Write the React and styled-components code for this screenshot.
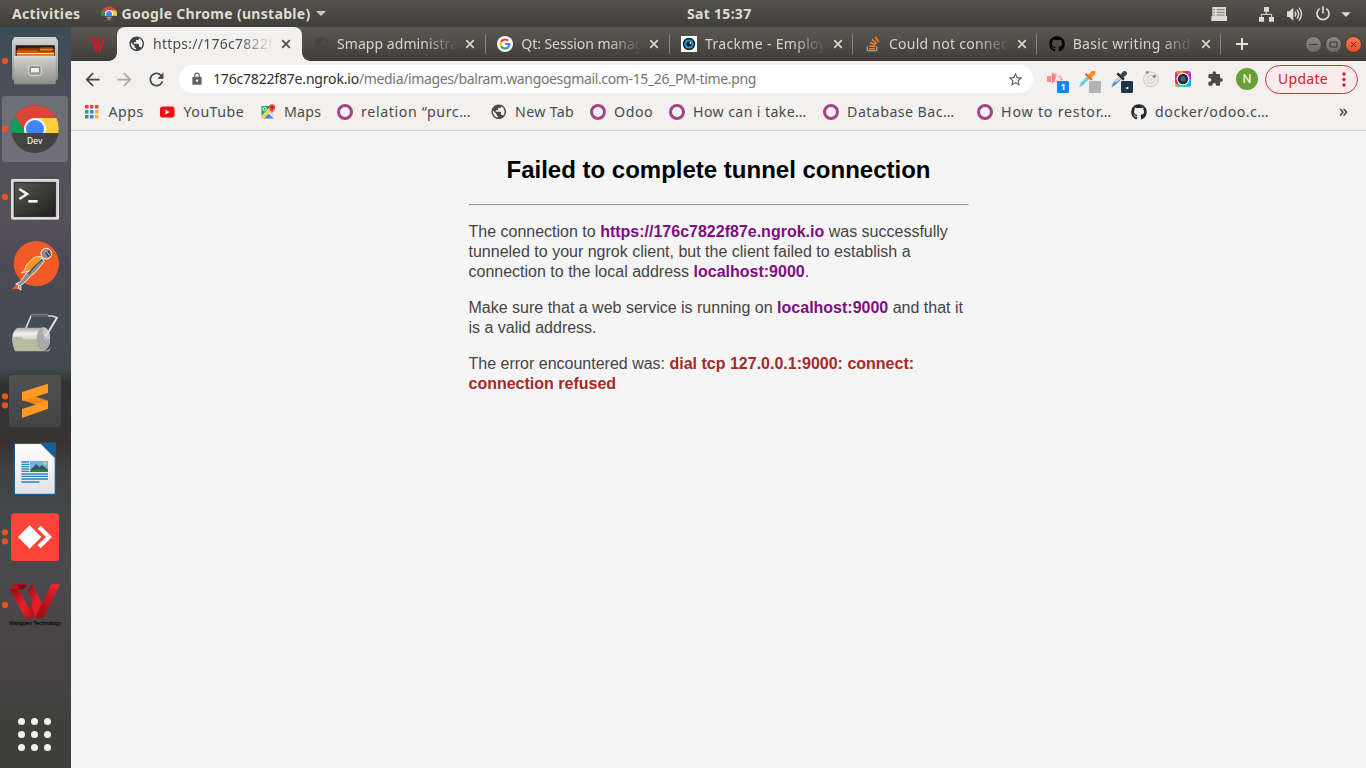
import React, { useLayoutEffect, useRef } from "react";
import styled, { createGlobalStyle, css } from "styled-components";
import {
  MdArrowBack,
  MdArrowForward,
  MdExtension,
  MdLock,
  MdPublic,
  MdRefresh,
  MdStarBorder,
} from "react-icons/md";
import { FaGithub } from "react-icons/fa";

const Global = createGlobalStyle`
  * { box-sizing: border-box; }
  body { margin: 0; overflow: hidden; background: #f5f5f5; }
`;

const uiFont = css`
  font-family: "Noto Sans", "Open Sans", sans-serif;
`;

const Desktop = styled.div`
  width: 1366px;
  height: 768px;
  display: flex;
  flex-direction: column;
  overflow: hidden;
  ${uiFont}
`;

const FitSpan = styled.span`
  display: inline-block;
  white-space: pre;
`;

/* Text set to an exact width by spreading the difference over its letters. */
function Fit({ w, children }) {
  const ref = useRef(null);
  useLayoutEffect(() => {
    const el = ref.current;
    el.style.letterSpacing = "0px";
    const natural = el.getBoundingClientRect().width;
    el.style.letterSpacing = `${(w - natural) / children.length}px`;
  }, [w, children]);
  return <FitSpan ref={ref}>{children}</FitSpan>;
}

/* ---------- system bar ---------- */

const SystemBar = styled.header`
  flex: none;
  height: 27px;
  display: flex;
  align-items: center;
  justify-content: space-between;
  background: linear-gradient(#55524a, #403f3a);
  color: #dfdbd2;
  font-size: 14px;
  font-weight: 700;
  line-height: 20px;
`;
const BarSide = styled.div`
  width: 600px;
  display: flex;
  align-items: center;
  justify-content: ${(p) => (p.$end ? "flex-end" : "flex-start")};
  padding: ${(p) => (p.$end ? "0 14px 0 0" : "0 0 0 12px")};
`;
const AppMenu = styled.div`
  display: flex;
  align-items: center;
  margin-left: 20px;
  gap: 5px;
`;
const Clock = styled.div`
  width: 166px;
  padding-left: 87px;
`;
const TrayIcons = styled.div`
  display: flex;
  align-items: center;
`;

/* ---------- dock ---------- */

const Workspace = styled.div`
  flex: 1;
  min-height: 0;
  display: flex;
`;
const DockBar = styled.nav`
  flex: none;
  width: 71px;
  display: flex;
  flex-direction: column;
  gap: 2px;
  padding: 1px 3px 0 2px;
  background: linear-gradient(
    #3d4b55 0,
    #4b4e58 60px,
    #52505a 130px,
    #57505a 190px,
    #4b4a52 240px,
    #454c53 300px,
    #43494e 342px,
    #303331 356px,
    #353534 400px,
    #38312f 415px,
    #3f4041 440px,
    #41474a 480px,
    #4a4a4d 540px,
    #4a4648 590px,
    #474344 630px,
    #40413f 690px,
    #3e3f3d 741px
  );
`;
const DockCell = styled.div`
  height: 66px;
  border-radius: 3px;
  background: ${(p) => (p.$active ? "rgba(180, 180, 185, 0.31)" : "transparent")};
`;
const AppsGrid = styled.div`
  display: grid;
  grid-template-columns: repeat(3, 7px);
  gap: 6px;
  margin: auto 0 17px 16px;
`;
const GridDot = styled.i`
  width: 7px;
  height: 7px;
  border-radius: 50%;
  background: #f0f0ee;
`;

/* ---------- browser ---------- */

const Browser = styled.main`
  flex: 1;
  min-width: 0;
  display: flex;
  flex-direction: column;
  background: #f5f5f5;
`;
const TabStrip = styled.div`
  flex: none;
  height: 34px;
  display: flex;
  align-items: center;
  background: linear-gradient(#5b5850, #403e39);
  color: #d8d4cb;
  font-size: 14px;
  line-height: 20px;
`;
const PinnedTab = styled.div`
  width: 46px;
  padding-left: 18px;
  display: flex;
`;
const Tab = styled.div`
  position: relative;
  flex: none;
  width: ${(p) => (p.$active ? 185 : 183.8)}px;
  height: 34px;
  display: flex;
  align-items: center;
  padding-left: ${(p) => (p.$first ? 11 : 11.500)}px;
  ${(p) =>
    p.$active &&
    css`
      padding-left: 12px;
      background: #f2f1f0;
      color: #4c4c4c;
      border-radius: 8px 8px 0 0;
      &::before,
      &::after {
        content: "";
        position: absolute;
        bottom: 0;
        width: 8px;
        height: 8px;
      }
      &::before {
        left: -8px;
        background: radial-gradient(circle at 0 0, transparent 7.5px, #f2f1f0 8px);
      }
      &::after {
        right: -8px;
        background: radial-gradient(circle at 100% 0, transparent 7.5px, #f2f1f0 8px);
      }
    `}
`;
const TabIcon = styled.span`
  flex: none;
  width: 16px;
  height: 16px;
  display: flex;
  align-items: center;
  justify-content: center;
  margin-right: 8px;
  color: ${(p) => p.$color || "inherit"};
  svg {
    flex: none;
  }
`;
const TabTitle = styled.span`
  flex: none;
  width: ${(p) => p.$w || 121}px;
  overflow: hidden;
  mask-image: linear-gradient(90deg, #000 calc(100% - 34px), transparent);
`;
const TabClose = styled.svg`
  flex: none;
  width: 10px;
  height: 10px;
  margin-left: ${(p) => p.$gap || 7}px;
  stroke: currentColor;
  stroke-width: 1.7;
`;
const TabDivider = styled.i`
  margin-left: auto;
  width: 1px;
  height: 20px;
  background: #85827a;
`;
const NewTab = styled.svg`
  width: 14px;
  height: 14px;
  margin-left: 14px;
  stroke: #e4e1d9;
  stroke-width: 2;
`;
const WindowButtons = styled.div`
  margin-left: auto;
  margin-right: 4px;
  display: flex;
  gap: 3px;
`;
const WindowButton = styled.span`
  width: 17px;
  height: 17px;
  border-radius: 50%;
  display: flex;
  border: 1px solid ${(p) => (p.$close ? "#5a3426" : "#45443f")};
  background: ${(p) =>
    p.$close ? "linear-gradient(#f47c57, #e24e22)" : "linear-gradient(#8d8a82, #6c6a63)"};
  svg {
    width: 15px;
    height: 15px;
    fill: none;
    stroke: #35342f;
  }
`;

const Toolbar = styled.div`
  flex: none;
  height: 36px;
  display: flex;
  align-items: center;
  background: #f2f1f0;
  color: #4a4a4a;
  padding-left: 10.5px;
`;
const NavButton = styled.span`
  width: 22px;
  height: 22px;
  margin-right: 10px;
  display: flex;
  align-items: center;
  justify-content: center;
  color: ${(p) => (p.$off ? "#a9a8a7" : "#474747")};
`;
const Omnibox = styled.div`
  width: 854px;
  height: 28px;
  margin-left: 1.5px;
  padding: 0 9px 0 11px;
  display: flex;
  align-items: center;
  border-radius: 14px;
  background: #fff;
  font-size: 14px;
  line-height: 20px;
  color: #757575;
`;
const Host = styled.span`
  margin-left: 9px;
  color: #2f2f2f;
`;
const OmniStar = styled.span`
  margin-left: auto;
  display: flex;
  color: #5f6368;
`;
const Extensions = styled.div`
  display: flex;
  margin-left: 7px;
`;
const Avatar = styled.span`
  width: 22px;
  height: 22px;
  margin: 0 7px 0 4px;
  border-radius: 50%;
  background: #689f38;
  color: #fff;
  font: 400 12.5px/22px Roboto, sans-serif;
  text-align: center;
`;
const UpdateButton = styled.span`
  width: 93px;
  height: 29px;
  display: flex;
  align-items: center;
  justify-content: space-between;
  padding: 0 11px 0 12px;
  border: 1px solid #d6303a;
  border-radius: 15px;
  background: #faecec;
  color: #cf2029;
  font-size: 14px;
  line-height: 20px;
`;
const Kebab = styled.svg`
  width: 4px;
  height: 15px;
  fill: currentColor;
`;

const Bookmarks = styled.div`
  flex: none;
  height: 34px;
  display: flex;
  align-items: center;
  gap: 16px;
  padding: 0 18px 4px 13px;
  background: #f2f1f0;
  border-bottom: 1px solid #d0cfce;
  font-size: 14.2px;
  line-height: 20px;
  color: #4a4a4a;
`;
const Bookmark = styled.span`
  flex: none;
  display: flex;
  align-items: center;
  gap: 8.6px;
  width: ${(p) => p.$w + 24}px;
`;
const BookmarkIcon = styled.span`
  flex: none;
  width: 16px;
  height: 16px;
  display: flex;
  align-items: center;
  justify-content: center;
  svg {
    flex: none;
  }
`;
const OdooRing = styled.i`
  width: 16px;
  height: 16px;
  border-radius: 50%;
  border: 3.5px solid #a24689;
`;
const More = styled.span`
  margin-left: auto;
  padding-bottom: 3px;
  font-size: 18px;
  color: #333;
`;

/* ---------- error page ---------- */

const Page = styled.article`
  width: 500px;
  margin: 0 auto;
  font: 16px/20px "Liberation Sans", Arial, sans-serif;
  color: #444;
  h1 {
    margin: 25px 0 21px;
    font-size: 24px;
    line-height: 27px;
    text-align: center;
    color: #000;
  }
  hr {
    margin: 0;
    border: 1px solid;
    border-color: #9a9a9a #eee #eee #9a9a9a;
  }
  p {
    margin: 16px 0;
  }
`;
const Address = styled.strong`
  color: #800e80;
`;
const Failure = styled.strong`
  color: #a52a2a;
`;

/* ---------- drawings ---------- */

function DockIcon({ top, dots = 1, children }) {
  const mid = top + 99;
  return (
    <svg width="66" height="66" viewBox={`6 ${top} 198 198`} overflow="visible">
      {dots === 1 && <circle cx="15" cy={mid} r="9.5" fill="#e95420" />}
      {dots === 2 && (
        <>
          <circle cx="15" cy={mid - 14} r="9.5" fill="#e95420" />
          <circle cx="15" cy={mid + 13} r="9.5" fill="#e95420" />
        </>
      )}
      {children}
    </svg>
  );
}

const Files = () => (
  <DockIcon top={9}>
    <defs>
      <linearGradient id="cab" x2="0" y2="1">
        <stop stopColor="#d2d2d0" />
        <stop offset="1" stopColor="#8d8d8b" />
      </linearGradient>
    </defs>
    <path d="M44 36h122l8 12v112q0 6-6 6H42q-6 0-6-6V48z" fill="url(#cab)" />
    <path d="M44 36h122l8 16H36z" fill="#cfcfcd" />
    <path d="M47 61h117v38H47z" fill="#1e1a18" />
    <path d="M54 68h68v-2h36v26H54z" fill="#8a3208" />
    <path d="M120 71h40v6h-40z" fill="#dd8b1e" />
    <path d="M50 75h60l6 5h46v6H50z" fill="#c9570f" />
    <path d="M50 84h112v4H50z" fill="#f5e2cc" />
    <path d="M50 88h112v6H50z" fill="#e58a2a" />
    <path d="M42 94h125v80q0 4-4 4H46q-4 0-4-4z" fill="url(#cab)" />
    <path d="M42 94h125v3H42z" fill="#e8e8e6" />
    <rect x="86" y="121" width="38" height="31" rx="6" fill="#a5a5a3" stroke="#dadad8" strokeWidth="3" />
    <rect x="91" y="127" width="28" height="17" rx="2" fill="#f0f0ee" stroke="#777" strokeWidth="3" />
  </DockIcon>
);

const ChromeDisc = () => (
  <>
    <circle cx="105" cy="312" r="72" fill="#434341" />
    <clipPath id="disc">
      <path d="M33 324V240h144v84z" />
    </clipPath>
    <g clipPath="url(#disc)">
      <circle cx="105" cy="312" r="72" fill="#db4437" />
      <path d="M105 279h64a72 72 0 0 1 6 45h-50z" fill="#ffcd40" />
      <path d="M45 272a72 72 0 0 0-9 60h52l-14-14z" fill="#0f9d58" />
      <circle cx="105" cy="312" r="33" fill="#f4f4f4" />
      <circle cx="105" cy="312" r="27" fill="#4285f4" />
    </g>
  </>
);

const ChromeDev = () => (
  <DockIcon top={213}>
    <ChromeDisc />
    <text x="104" y="358" textAnchor="middle" fontFamily="Roboto" fontSize="28" fill="#fff">
      Dev
    </text>
  </DockIcon>
);

const Terminal = () => (
  <DockIcon top={417}>
    <defs>
      <linearGradient id="scr" x2="1" y2="1">
        <stop stopColor="#565655" />
        <stop offset=".5" stopColor="#3a3a39" />
        <stop offset="1" stopColor="#1f1f1e" />
      </linearGradient>
    </defs>
    <rect x="33" y="462" width="144" height="122" rx="4" fill="#c9c9c7" />
    <rect x="36" y="464" width="138" height="116" rx="3" fill="none" stroke="#efefed" strokeWidth="3" />
    <rect x="43" y="473" width="123" height="101" fill="url(#scr)" stroke="#222" strokeWidth="3" />
    <path d="M58 492l23 15-23 15" fill="none" stroke="#f4f4f2" strokeWidth="8" />
    <path d="M85 525h28v8H85z" fill="#f4f4f2" />
  </DockIcon>
);

const Postman = () => (
  <DockIcon top={6} dots={0}>
    <circle cx="109" cy="101" r="68" fill="#f15a24" />
    <path d="M35 178l18-18 10 16z" fill="#f15a24" />
    <path
      d="M126 84l7 10-26 32-13 10-24 25-8 4 1 15-8-5 1-10-9-3 15-8 18-26 22-18z"
      fill="#8e8e8e"
      stroke="#fff"
      strokeWidth="2.500"
    />
    <path
      d="M124 80q-16-3-26 6L80 104l-6 15-10 10 20-5 12-6 28-32z"
      fill="#f9951d"
      stroke="#fff"
      strokeWidth="2.500"
    />
    <path d="M126 88l-32 32-8 12" fill="none" stroke="#555" strokeWidth="5" />
    <circle cx="139" cy="71" r="16" fill="#8f8f8f" stroke="#fff" strokeWidth="3" />
    <path d="M136 70l13-10 3 17-8 4z" fill="#454545" />
    <path d="M142 67l6 9" stroke="#ddd" strokeWidth="3" />
  </DockIcon>
);

const PaperRoll = () => (
  <DockIcon top={210} dots={0}>
    <defs>
      <linearGradient id="roll" x2="0" y2="1">
        <stop stopColor="#a9aaa7" />
        <stop offset=".25" stopColor="#efefee" />
        <stop offset="1" stopColor="#9c9d98" />
      </linearGradient>
    </defs>
    <path d="M50 358q50 14 102 0l-6-10H60z" fill="#2c2f2c" opacity=".5" />
    <path d="M76 298l17-40h64l14 5-34 58" fill="none" stroke="#d7d8d7" strokeWidth="5" />
    <path d="M94 256h50" stroke="#7c7f80" strokeWidth="9" />
    <path d="M94 258h50" stroke="#4e5051" strokeWidth="4" />
    <path d="M52 293h76q22 6 22 35t-20 35H48q-11-14-11-38 0-22 15-32z" fill="url(#roll)" />
    <path d="M37 321h29l5 7h42l6 8q6 16 14 25 12 3 18-8 1 12-13 11H46q-10-15-9-43z" fill="#b8bb9d" />
    <ellipse cx="130" cy="327" rx="20" ry="35" fill="#a9aba9" />
    <path d="M130 292q20 2 20 35l-20 2z" fill="#c9cac8" />
    <path d="M171 263l-36 60" stroke="#e0e1e0" strokeWidth="5" />
    <circle cx="133" cy="325" r="4" fill="#e8e8e8" stroke="#777" strokeWidth="2" />
  </DockIcon>
);

const Sublime = () => (
  <DockIcon top={414} dots={2}>
    <defs>
      <linearGradient id="sub" x2="0" y2="1">
        <stop stopColor="#515151" />
        <stop offset="1" stopColor="#444" />
      </linearGradient>
    </defs>
    <rect x="27" y="435" width="156" height="156" rx="9" fill="url(#sub)" />
    <path d="M66 486v24l78 26v-24z" fill="#f08a16" />
    <path d="M66 486l78-25v27l-78 25z" fill="#ff9a23" />
    <path d="M66 537l78-25v24l-78 28z" fill="#ff9a23" />
  </DockIcon>
);

const Writer = () => (
  <DockIcon top={18} dots={0}>
    <defs>
      <linearGradient id="sheet" x2="0" y2="1">
        <stop stopColor="#fff" />
        <stop offset="1" stopColor="#e2e2e2" />
      </linearGradient>
    </defs>
    <path d="M43 40h80l43 43v110H43z" fill="url(#sheet)" stroke="#175f93" strokeWidth="4" />
    <path d="M124 37h44v46z" fill="#454c4f" />
    <path d="M128 39h39v41z" fill="#0f62a0" />
    <path d="M122 42l43 43" stroke="#7fb6d8" strokeWidth="3" />
    <path
      d="M64 96h24M64 103h24M64 110h24M64 117h24M64 124h24M64 132h80M64 139h80M64 147h80M64 156h54"
      stroke="#2a86bd"
      strokeWidth="4"
    />
    <path d="M90 93h54v33H90z" fill="#6fb4e0" />
    <path d="M92 120l16-18 10 9 8-6 18 15v6H92z" fill="#35525c" />
    <path d="M92 121q26-8 52 0v5H92z" fill="#2d7a4a" />
    <circle cx="135" cy="100" r="5" fill="#f5c62b" />
  </DockIcon>
);

const AnyDesk = () => (
  <DockIcon top={222} dots={2}>
    <rect x="33" y="250" width="144" height="143" rx="9" fill="#fc4439" />
    <path d="M89 286l35 35-35 35-35-35zM113 296l9-9 34 34-34 34-9-9 25-25z" fill="#fff" />
  </DockIcon>
);

const RedW = () => (
  <>
    <defs>
      <linearGradient id="w1" x2="1" y2="1">
        <stop stopColor="#8b0d11" />
        <stop offset=".55" stopColor="#e8202a" />
        <stop offset="1" stopColor="#b5141b" />
      </linearGradient>
      <linearGradient id="w2" x1="1" x2="0" y2="1">
        <stop stopColor="#f0212b" />
        <stop offset="1" stopColor="#8e0d12" />
      </linearGradient>
    </defs>
    <path d="M28 478l12-16h42l-12 16z" fill="#b8161c" />
    <path d="M52 464h30l-12 14H58z" fill="#7b0c0f" />
    <path d="M75 563l28-62 13 22-15 40z" fill="url(#w2)" />
    <path d="M30 478h27l44 85H74z" fill="url(#w1)" />
    <path d="M84 478l14-16 35 74-13 26h-14z" fill="url(#w1)" />
    <path d="M106 563l48-101h27l-50 101z" fill="url(#w2)" />
    <path d="M154 462h27l-8 14h-26z" fill="#e8242d" />
  </>
);

const Wangoes = () => (
  <DockIcon top={426}>
    <RedW />
    <text
      x="27"
      y="585"
      textLength="156"
      lengthAdjust="spacingAndGlyphs"
      fontFamily="Liberation Sans"
      fontSize="15"
      fill="#080808"
      stroke="#080808"
      strokeWidth=".4"
    >
      Wangoes Technology
    </text>
  </DockIcon>
);

const GoogleG = () => (
  <svg width="16" height="16" viewBox="0 0 48 48">
    <circle cx="24" cy="24" r="24" fill="#fff" />
    <g fill="none" strokeWidth="6.5">
      <path d="M33.5 14.5A13.5 13.5 0 0 0 12 17.8" stroke="#ea4335" />
      <path d="M12 17.8a13.5 13.5 0 0 0 0 12.5" stroke="#fbbc05" />
      <path d="M12 30.2a13.5 13.5 0 0 0 21 3.8" stroke="#34a853" />
      <path d="M33 34a13.5 13.5 0 0 0 4.4-10H24" stroke="#4285f4" />
    </g>
  </svg>
);

const EyeIcon = () => (
  <svg width="16" height="16" viewBox="0 0 16 16">
    <path d="M0 0h16v16H0z" fill="#fff" />
    <circle cx="8" cy="8" r="6.2" fill="#14222d" />
    <circle cx="8" cy="8" r="4.6" fill="#1d9fd6" />
    <circle cx="8" cy="8" r="2.6" fill="#050a10" />
    <circle cx="9.3" cy="7" r=".9" fill="#fff" />
  </svg>
);

const StackIcon = () => (
  <svg width="16" height="16" viewBox="0 0 48 48" fill="none">
    <path d="M7 31v13h28V31" stroke="#9a9c9f" strokeWidth="4" />
    <g stroke="#f47f2c" strokeWidth="4.500">
      <path d="M12 38h18M12 29l19 3M15 19l17 8M21 10l14 13M31 3l10 15" />
    </g>
  </svg>
);

const SmallChrome = () => (
  <svg width="16" height="16" viewBox="30 237 150 150">
    <path d="M30 322a75 82 0 0 1 150 0z" fill="#db4437" />
    <path d="M110 279h62q10 20 8 49h-60z" fill="#ffcd40" />
    <path d="M40 278q-12 22-9 50h55z" fill="#0f9d58" />
    <circle cx="105" cy="312" r="37" fill="#fff" />
    <circle cx="105" cy="312" r="28" fill="#4285f4" />
    <path d="M50 330h110v57H50z" fill="#4b4942" />
    <path d="M82 343h46M90 360h30" stroke="#bbb" strokeWidth="9" />
  </svg>
);

const AppsIcon = () => (
  <svg width="14" height="14" viewBox="0 0 14 14">
    {["#f0434a", "#f0434a", "#f0434a", "#34a05c", "#2a85f0", "#f9b424", "#34a05c", "#2a85f0", "#f9b424"].map(
      (c, i) => (
        <rect key={i} x={(i % 3) * 5} y={Math.floor(i / 3) * 5} width="3.5" height="3.5" fill={c} />
      )
    )}
  </svg>
);

const YouTubeIcon = () => (
  <svg width="16" height="16" viewBox="0 0 16 16">
    <rect x="1" y="2.5" width="14.5" height="11" rx="2.6" fill="#f50b12" />
    <path d="M6.5 5.6v4.8L10.7 8z" fill="#fff" />
  </svg>
);

const MapsIcon = () => (
  <svg width="16" height="16" viewBox="0 0 16 16">
    <path d="M1.5 2H14v12.5H1.5z" fill="#e6e7e8" />
    <path d="M1.5 2H11L1.5 12z" fill="#1fa463" />
    <path d="M1.5 12.5L11.5 2 14 5 5 14.5H1.5z" fill="#fcd44a" />
    <path d="M4 14.5l4.7-4.7 5.3 4.7z" fill="#4285f4" />
    <path d="M8.7 9.8L14 5v9.5z" fill="#dfe1e3" />
    <circle cx="4.6" cy="5" r="1.6" fill="none" stroke="#fff" strokeWidth="1" />
    <path d="M12 9.5C11.6 7 9 6 9 3.3a3.1 3.1 0 0 1 6.2 0C15.200 6 12.500 7 12 9.500z" fill="#ea4335" />
    <circle cx="12.100" cy="3.300" r="1.100" fill="#8c1d15" />
  </svg>
);

function ExtIcon({ left, children }) {
  return (
    <svg width="32" height="32" viewBox={`${left} 189 96 96`}>
      {children}
    </svg>
  );
}

const ExtensionRow = () => (
  <Extensions>
    <ExtIcon left={102}>
      <path d="M123 228h12v18h-12z" fill="#fb8a8d" />
      <path d="M137 218l8 3 5 8-5 17-8 5z" fill="#f9787c" />
      <path d="M146 222l6 3M156 228l10 5M150 246l4-3" stroke="#fba9ab" strokeWidth="6" />
      <path d="M163 233l9 5-8 5z" fill="#fb8a8d" />
      <rect x="153" y="243" width="36" height="36" rx="4" fill="#0c88ee" />
      <text x="171" y="270" textAnchor="middle" fontFamily="Noto Sans" fontSize="27" fontWeight="700" fill="#fff">
        1
      </text>
    </ExtIcon>
    <ExtIcon left={198}>
      <path d="M219 262l6-15 20-19 7 7-20 20z" fill="#6ed0dc" />
      <path d="M238 221l20 18" stroke="#e0561f" strokeWidth="6" />
      <path d="M245 226l12-13h11v10l-13 12z" fill="#ff8a1d" />
      <rect x="249" y="243" width="36" height="36" rx="4" fill="#b3b3b3" />
    </ExtIcon>
    <ExtIcon left={294}>
      <path d="M316 262l5-14 21-20 7 7-21 20z" fill="#4b8fc4" />
      <path d="M324 248l17-18 5 5-12 9z" fill="#dfe7ee" />
      <path d="M334 220l20 19" stroke="#222" strokeWidth="7" />
      <path d="M341 226l12-13q11-1 10 10l-13 12z" fill="#3d4347" />
      <rect x="345" y="243" width="36" height="36" rx="4" fill="#203447" />
      <path d="M359 262h3v5h-3z" fill="#f2954a" />
      <path d="M362 261h5v6h-5z" fill="#fff" />
    </ExtIcon>
    <ExtIcon left={390}>
      <circle cx="435" cy="238" r="22" fill="#ededec" stroke="#c6c6c6" strokeWidth="3" />
      <circle cx="435" cy="238" r="12" fill="none" stroke="#cfcfcf" strokeWidth="3" />
      <circle cx="435" cy="238" r="5" fill="#dedede" />
      <circle cx="424" cy="217" r="5" fill="#9a9a9a" />
      <circle cx="445" cy="229" r="5" fill="#8e8e8e" />
    </ExtIcon>
    <ExtIcon left={486}>
      <clipPath id="lens">
        <rect x="507" y="213" width="48" height="48" rx="8" />
      </clipPath>
      <g clipPath="url(#lens)">
        <path d="M507 213h24v24z" fill="#ff8a1d" />
        <path d="M531 213h24l-24 24z" fill="#fb2d50" />
        <path d="M507 213l24 24-24 24z" fill="#f5256e" />
        <path d="M555 213v48l-24-24z" fill="#b32df0" />
        <path d="M555 240v21h-30l6-24z" fill="#12b5f5" />
        <path d="M507 261l24-24 14 24z" fill="#2bd39b" />
        <path d="M507 261v-14l10 14z" fill="#ffb01d" />
      </g>
      <circle cx="531" cy="237" r="19" fill="#fff" />
      <circle cx="531" cy="237" r="15.500" fill="#1d2b38" />
      <circle cx="531" cy="237" r="8" fill="#456080" />
    </ExtIcon>
    <ExtIcon left={582}>
      <g transform="translate(603 212) scale(2.07)">
        <MdExtension size="24" color="#4a4a4a" />
      </g>
    </ExtIcon>
  </Extensions>
);

const CloseMark = ({ gap }) => (
  <TabClose viewBox="0 0 10 10" $gap={gap}>
    <path d="M1.200 1.200l7.600 7.600M8.800 1.200L1.200 8.800" />
  </TabClose>
);

const tabs = [
  { title: "Smapp administra", w: 121, icon: <MdPublic size={17} />, color: "#45443f" },
  { title: "Qt: Session manag", w: 122, icon: <GoogleG /> },
  { title: "Trackme - Employ", w: 121, icon: <EyeIcon /> },
  { title: "Could not connec", w: 119, icon: <StackIcon /> },
  { title: "Basic writing and", w: 118, icon: <FaGithub size={16} />, color: "#050505" },
];

const ring = <OdooRing />;
const bookmarks = [
  { label: "Apps", w: 35, icon: <AppsIcon /> },
  { label: "YouTube", w: 60.5, icon: <YouTubeIcon /> },
  { label: "Maps", w: 37, icon: <MapsIcon /> },
  { label: "relation “purc…", w: 110, box: 114, icon: ring },
  { label: "New Tab", w: 59, icon: <MdPublic size={17.500} /> },
  { label: "Odoo", w: 39, icon: ring },
  { label: "How can i take…", w: 113.5, box: 114, icon: ring },
  { label: "Database Bac…", w: 107.5, box: 114, icon: ring },
  { label: "How to restor…", w: 111, box: 114, icon: ring },
  { label: "docker/odoo.c…", w: 114, icon: <FaGithub size={16} color="#24292e" /> },
];

export default function App() {
  return (
    <Desktop>
      <Global />
      <SystemBar>
        <BarSide>
          <Fit w={68.5}>Activities</Fit>
          <AppMenu>
            <SmallChrome />
            <Fit w={189}>Google Chrome (unstable)</Fit>
            <svg width="10" height="5" viewBox="0 0 10 5">
              <path d="M0 0h10L5 5z" fill="#cfccc4" />
            </svg>
          </AppMenu>
        </BarSide>
        <Clock>
          <Fit w={64.5}>Sat 15:37</Fit>
        </Clock>
        <BarSide $end>
          <TrayIcons>
            <svg width="142" height="20" viewBox="612 9 426 60" fill="#dfdbd2">
              <path d="M619 18h41v27h3v15h-47V45h3z" />
              <path d="M622 26h5M632 26h24M622 34h5M632 34h24M622 42h5M632 42h24" stroke="#77746c" strokeWidth="3" />
              <path d="M774 18h15v14h-15zM759 48h15v14h-15zM789 48h15v14h-15z" />
              <path d="M781 32v9M766 49v-9h31v9" fill="none" stroke="#dfdbd2" strokeWidth="3" />
              <path d="M843 31h7l12-11v39l-12-11h-7z" />
              <path
                d="M867 32q5 7 0 15M873 26q10 13 0 27M879 20q15 19 0 39"
                fill="none"
                stroke="#dfdbd2"
                strokeWidth="4"
              />
              <path d="M941 23a18 18 0 1 0 20 0M951 16v21" fill="none" stroke="#dfdbd2" strokeWidth="5" />
              <path d="M1006 34h28l-14 14z" />
            </svg>
          </TrayIcons>
        </BarSide>
      </SystemBar>

      <Workspace>
        <DockBar>
          <DockCell><Files /></DockCell>
          <DockCell $active><ChromeDev /></DockCell>
          <DockCell><Terminal /></DockCell>
          <DockCell><Postman /></DockCell>
          <DockCell><PaperRoll /></DockCell>
          <DockCell><Sublime /></DockCell>
          <DockCell><Writer /></DockCell>
          <DockCell><AnyDesk /></DockCell>
          <DockCell><Wangoes /></DockCell>
          <AppsGrid>
            {Array.from({ length: 9 }, (_, i) => (
              <GridDot key={i} />
            ))}
          </AppsGrid>
        </DockBar>

        <Browser>
          <TabStrip>
            <PinnedTab>
              <svg width="17" height="15" viewBox="27 458 156 108" preserveAspectRatio="none">
                <g fill="none" stroke="#d9142a" strokeWidth="17">
                  <path d="M30 470h34l26 86 26-72M82 470h30l16 86 42-92" />
                </g>
              </svg>
            </PinnedTab>
            <Tab $active>
              <TabIcon $color="#454545"><MdPublic size={17.500} /></TabIcon>
              <TabTitle $w={120}>
                <Fit w={120}>https://176c7822f</Fit>
              </TabTitle>
              <CloseMark gap={8} />
            </Tab>
            {tabs.map((t, i) => (
              <Tab key={t.title} $first={i === 0}>
                <TabIcon $color={t.color}>{t.icon}</TabIcon>
                <TabTitle>
                  <Fit w={t.w}>{t.title}</Fit>
                </TabTitle>
                <CloseMark />
                <TabDivider />
              </Tab>
            ))}
            <NewTab viewBox="0 0 14 14">
              <path d="M7 1v12M1 7h12" />
            </NewTab>
            <WindowButtons>
              <WindowButton>
                <svg viewBox="0 0 15 15"><path d="M3.500 7.500h8" /></svg>
              </WindowButton>
              <WindowButton>
                <svg viewBox="0 0 15 15"><path d="M4 5h7v5H4z" /></svg>
              </WindowButton>
              <WindowButton $close>
                <svg viewBox="0 0 15 15"><path d="M5 5l5 5M10 5l-5 5" /></svg>
              </WindowButton>
            </WindowButtons>
          </TabStrip>

          <Toolbar>
            <NavButton><MdArrowBack size={21} /></NavButton>
            <NavButton $off><MdArrowForward size={21} /></NavButton>
            <NavButton><MdRefresh size={21} /></NavButton>
            <Omnibox>
              <MdLock size={14} color="#5f6368" />
              <Host><Fit w={146}>176c7822f87e.ngrok.io</Fit></Host>
              <Fit w={397}>/media/images/balram.wangoesgmail.com-15_26_PM-time.png</Fit>
              <OmniStar><MdStarBorder size={17} /></OmniStar>
            </Omnibox>
            <ExtensionRow />
            <Avatar>N</Avatar>
            <UpdateButton>
              <Fit w={50}>Update</Fit>
              <Kebab viewBox="0 0 4 15">
                <circle cx="2" cy="2" r="1.700" />
                <circle cx="2" cy="7.500" r="1.700" />
                <circle cx="2" cy="13" r="1.700" />
              </Kebab>
            </UpdateButton>
          </Toolbar>

          <Bookmarks>
            {bookmarks.map((b) => (
              <Bookmark key={b.label} $w={b.box || b.w}>
                <BookmarkIcon>{b.icon}</BookmarkIcon>
                <Fit w={b.w}>{b.label}</Fit>
              </Bookmark>
            ))}
            <More>»</More>
          </Bookmarks>

          <Page>
            <h1>Failed to complete tunnel connection</h1>
            <hr />
            <p>
              The connection to <Address>https://176c7822f87e.ngrok.io</Address> was successfully tunneled to your
              ngrok client, but the client failed to establish a connection to the local address{" "}
              <Address>localhost:9000</Address>.
            </p>
            <p>
              Make sure that a web service is running on <Address>localhost:9000</Address> and that it is a valid
              address.
            </p>
            <p>
              The error encountered was: <Failure>dial tcp 127.0.0.1:9000: connect: connection refused</Failure>
            </p>
          </Page>
        </Browser>
      </Workspace>
    </Desktop>
  );
}
